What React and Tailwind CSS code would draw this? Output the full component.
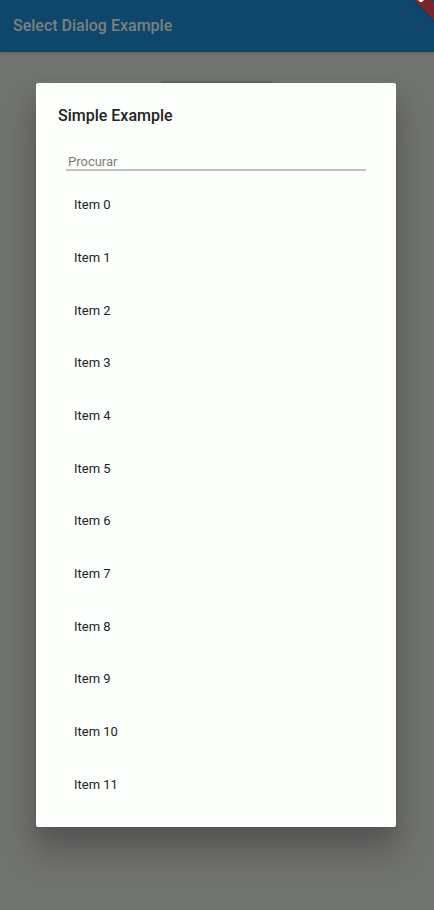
const items = Array.from({ length: 12 }, (_, index) => `Item ${index}`);

export default function App() {
  return (
    <div className="relative min-h-dvh overflow-hidden bg-[#717370] font-[Roboto,sans-serif]">
      <header className="flex h-[52px] items-center bg-[#0f466b] px-[13px] shadow-[0_1px_3px_rgba(0,0,0,0.2)]">
        <h1 className="text-[16px] leading-5 font-medium text-[#7b827f]">Select Dialog Example</h1>
      </header>
      <main className="flex justify-center pt-[29px]">
        <button
          type="button"
          aria-label="Simple Example"
          className="h-8 w-28 rounded-xs bg-[#636562]"
        />
      </main>

      <svg className="absolute top-0 right-0 h-6 w-6" viewBox="0 0 24 24" aria-hidden="true">
        <path d="M2 0L24 22V19L5 0Z" fill="#0b3350" opacity="0.3" />
        <path d="M4 0H24V20Z" fill="#7a242b" />
        <path d="M21 0H24V3Z" fill="#0f466b" />
        <path d="M8 0H14L12 2H10Z" fill="#f4f4ee" />
      </svg>

      <div className="absolute inset-0 flex flex-col py-[83px] pr-[38px] pl-9">
        <section
          role="dialog"
          aria-modal="true"
          aria-labelledby="dialog-title"
          className="flex flex-1 flex-col rounded-xs bg-[#fdfffc] pb-4 shadow-[0_24px_32px_2px_rgba(0,0,0,0.2),0_10px_20px_0px_rgba(0,0,0,0.09)]"
        >
          <h2
            id="dialog-title"
            className="px-[22px] pt-[23px] text-[16px] leading-5 font-medium text-[#222422]"
          >
            Simple Example
          </h2>
          <div className="px-[30px] pt-[26px] pb-2">
            <input
              type="text"
              aria-label="Procurar"
              placeholder="Procurar"
              className="block h-[19px] w-full border-b-2 border-[#c2c4c1] px-0.5 pt-0.5 text-[13px] leading-4 text-[#222422] outline-none placeholder:text-[#7c7e7b]"
            />
          </div>
          <ul className="flex flex-1 flex-col px-[30px]">
            {items.map((item) => (
              <li key={item} className="flex flex-1">
                <button
                  type="button"
                  className="flex w-full items-center px-2 text-left text-[13px] leading-4 text-[#222422]"
                >
                  {item}
                </button>
              </li>
            ))}
          </ul>
        </section>
      </div>
    </div>
  );
}
